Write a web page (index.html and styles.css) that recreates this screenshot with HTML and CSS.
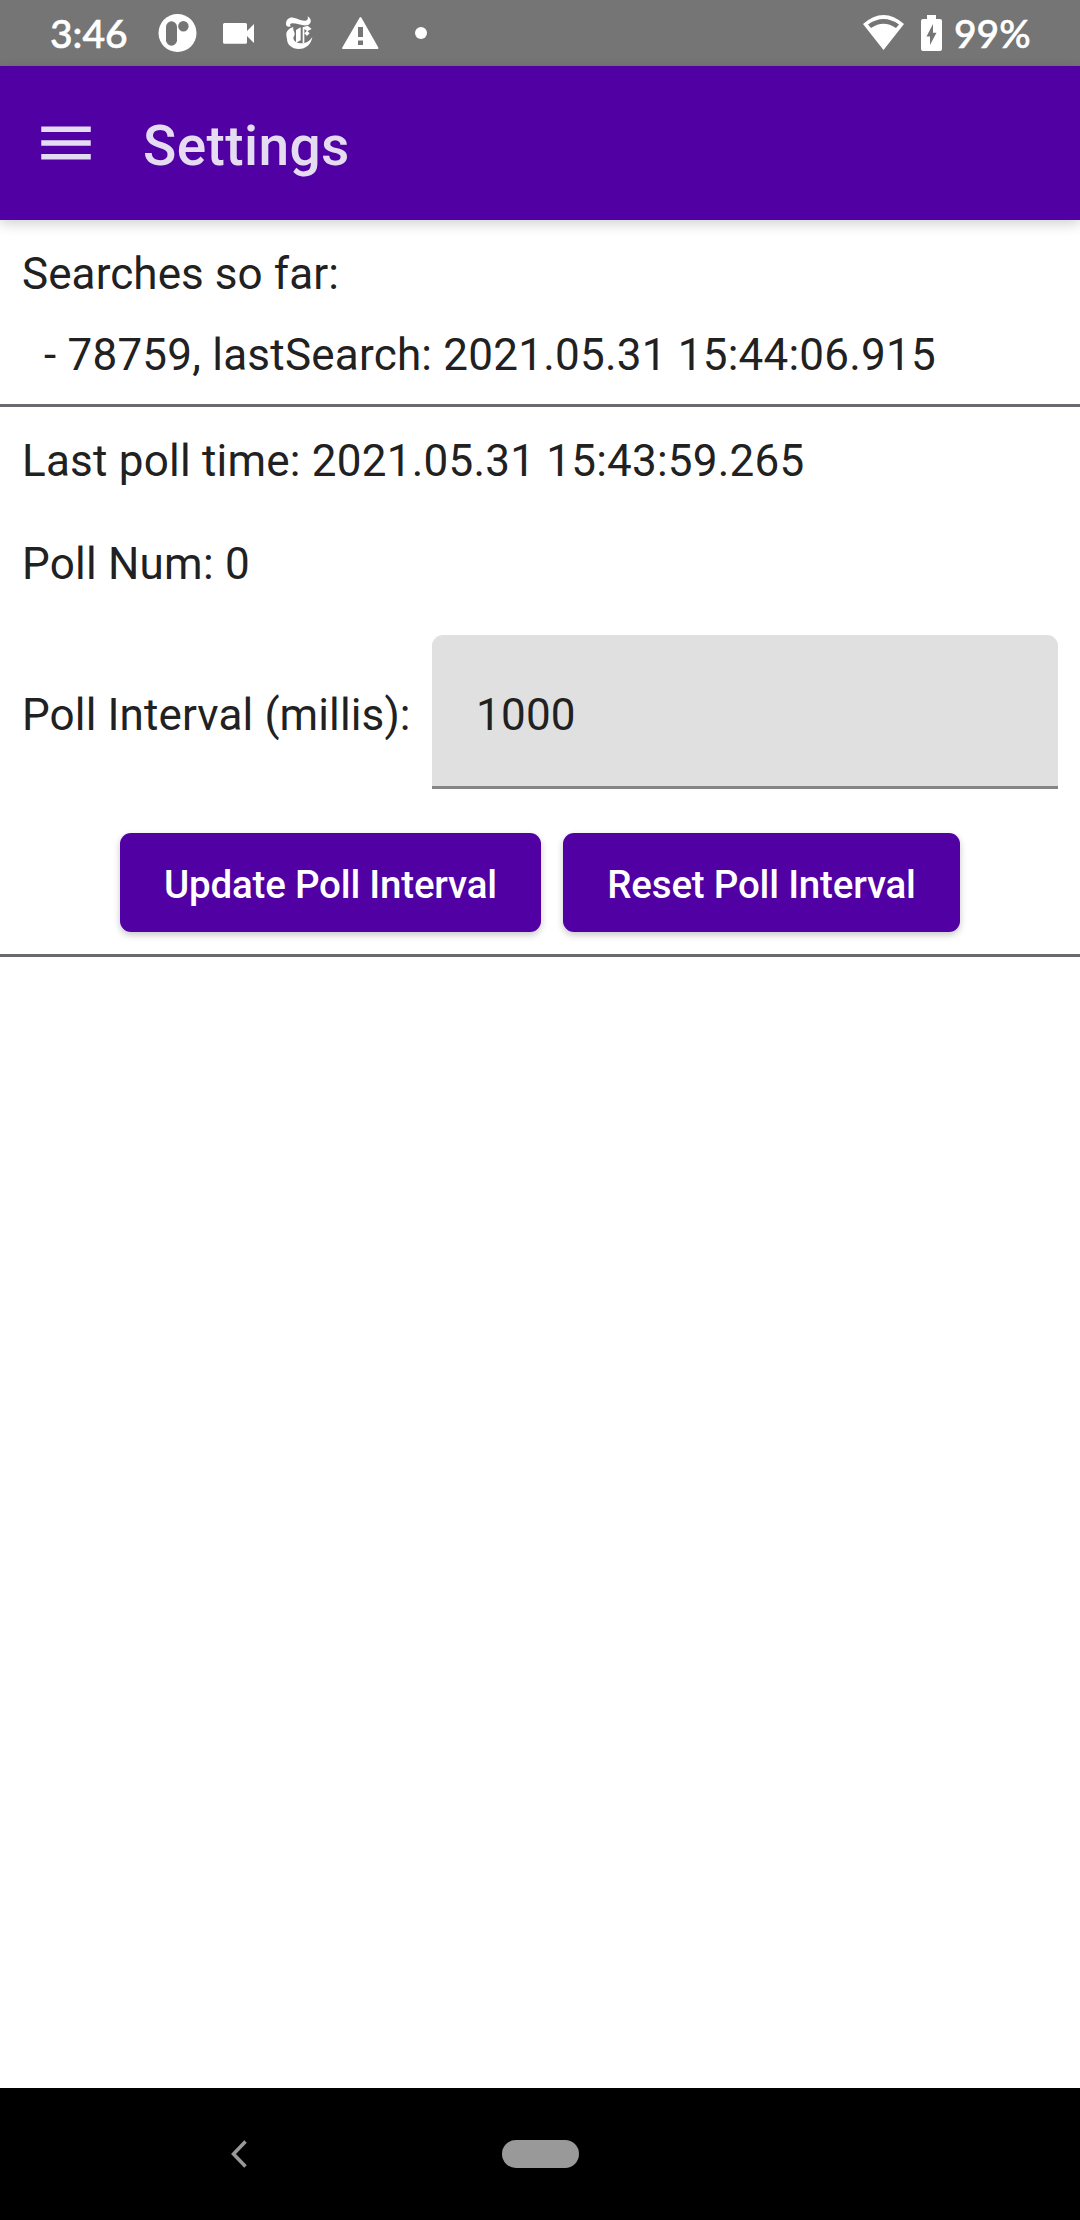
FILE: index.html
```html
<!DOCTYPE html>
<html lang="en">
<head>
<meta charset="utf-8">
<title>Settings</title>
<link rel="stylesheet" href="styles.css">
</head>
<body>
<div class="screen">
  <header class="status">
    <span class="status-text clock">3:46</span>
    <svg class="status-icons" width="280" height="66" viewBox="150 0 280 66" fill="#fff">
      <circle cx="177.5" cy="33" r="19"/>
      <rect x="166" y="21.3" width="11" height="24.4" rx="5.5" fill="#757575"/>
      <circle cx="183.4" cy="26.3" r="5.2" fill="#757575"/>
      <path d="M224.500 23H245.500Q247 23 247 24.500V31L254 24V43L247 36V42.300Q247 43.800 245.500 43.800H224.500Q223 43.800 223 42.300V24.500Q223 23 224.500 23Z"/>
      <g transform="translate(278 8) scale(.3333)">
        <path d="M24 48C24 34 34 27 46 29C60 32 75 40 84 38C90 36 92 30 88 25C100 30 103 46 90 51C76 56 56 45 42 46C36 47 34 50 39 55C30 58 24 55 24 48Z"/>
        <path d="M46 57C36 60 24 68 25 80C25 86 27 89 27 93C27 110 42 123 62 123C84 123 100 108 103 86C95 100 83 106 72 106C58 106 47 100 46 91C46 86 50 84 50 77C50 70 44 68 46 57Z"/>
        <path d="M54 66L68 58V97L54 104Z"/>
        <path d="M74 58L89 53L101 63L88 70L79 63V106H74ZM87 68L95 76L87 84L79 76Z"/>
      </g>
      <path fill-rule="evenodd" d="M359.700 17.500Q360.500 16.300 361.300 17.500L378.300 47.500Q378.800 49 377.500 49H343Q341.500 49 342.300 47.500ZM358 27V37H363V27ZM358 40.500V45H363V40.500Z"/>
      <circle cx="421" cy="33" r="6"/>
    </svg>
    <span class="spacer"></span>
    <svg class="status-system" width="82" height="66" viewBox="861 0 82 66" fill="#fff">
      <path fill-rule="evenodd" d="M863 24Q883.500 6 904 24L883.500 50ZM868 24.500L871 28Q883.500 19.500 896 28L899 24.500Q883.500 13.500 868 24.500Z"/>
      <path fill-rule="evenodd" d="M927 15H936V19H940Q942 19 942 21V49Q942 51 940 51H923Q921 51 921 49V21Q921 19 923 19H927ZM933 24L926.500 36.500H930V45L936.500 32.800H933Z"/>
    </svg>
    <span class="status-text battery">99%</span>
  </header>
  <nav class="appbar">
    <svg width="66" height="66" viewBox="0 0 24 24" fill="#e6dcf2"><path d="M3 18h18v-2H3v2zm0-5h18v-2H3v2zm0-7v2h18V6H3z"/></svg>
    <h1 class="title">Settings</h1>
  </nav>
  <main class="content">
    <section class="searches">
      <p class="heading">Searches so far:</p>
      <p class="entry">- 78759, lastSearch: 2021.05.31 15:44:06.915</p>
    </section>
    <section class="poll">
      <p>Last poll time: 2021.05.31 15:43:59.265</p>
      <p>Poll Num: 0</p>
      <div class="interval">
        <label for="interval">Poll Interval (millis):</label>
        <input id="interval" class="field" type="text" value="1000">
      </div>
      <div class="actions">
        <button class="btn update">Update Poll Interval</button>
        <button class="btn reset">Reset Poll Interval</button>
      </div>
    </section>
  </main>
  <footer class="navbar">
    <svg class="back" width="18" height="30" viewBox="0 0 18 30"><path d="M15.500 2.500L3.500 15L15.500 27.500" fill="none" stroke="#999" stroke-width="3.500"/></svg>
    <span class="home"></span>
  </footer>
</div>
</body>
</html>
```
FILE: styles.css
```css
* { box-sizing: border-box; }
body { margin: 0; background: #fff; font-family: Roboto, sans-serif; }
.screen { display: flex; flex-direction: column; width: 1080px; height: 2220px; }

.status { display: flex; height: 66px; padding: 0 50px; background: #757575; color: #fff; }
.status-text { font-family: Lato, sans-serif; font-weight: 500; font-size: 39px; line-height: 67px; white-space: nowrap; -webkit-text-stroke: .6px #fff; }
.clock { width: 100px; }
.battery { width: 76px; margin-left: 11px; }
.spacer { flex: 1; }

.appbar { display: flex; align-items: center; gap: 44px; height: 154px; padding-left: 33px; background: #5000a3; box-shadow: 0 4px 12px rgba(0, 0, 0, .18); }
.title { margin: 5px 0 0; color: #e6dcf2; font-size: 55px; line-height: 64px; font-weight: 500; letter-spacing: .41px; }

.content { flex: 1; color: #212121; font-size: 44px; line-height: 52px; letter-spacing: .22px; }
.content p { margin: 0; white-space: nowrap; }
.searches { height: 187px; padding: 28px 22px 0; border-bottom: 3px solid #696a6f; }
.searches .heading { letter-spacing: .08px; }
.searches .entry { margin: 29px 0 0 22px; }
.poll { height: 550px; padding: 28px 22px 0; border-bottom: 3px solid #696a6f; }
.poll p { margin-bottom: 51px; }
.interval { display: flex; align-items: center; justify-content: space-between; height: 154px; margin-top: -6px; }
.interval label { padding-top: 6px; letter-spacing: .12px; white-space: nowrap; }
.field { width: 626px; height: 154px; padding: 8px 44px 0; border: 0; border-bottom: 3px solid #858585; border-radius: 11px 11px 0 0; background: #e0e0e0; color: inherit; font: inherit; letter-spacing: inherit; outline: 0; }
.actions { display: flex; justify-content: center; gap: 22px; margin-top: 44px; }
.btn { height: 99px; padding: 4px 0 0; border: 0; border-radius: 11px; background: #5000a3; box-shadow: 0 3px 7px rgba(0, 0, 0, .22); color: #fff; font: 500 38.5px/46px Roboto, sans-serif; letter-spacing: -.2px; white-space: nowrap; }
.update { width: 421px; }
.reset { width: 397px; }

.navbar { display: flex; align-items: center; height: 132px; padding: 0 0 0 230px; background: #000; }
.home { width: 77px; height: 28px; margin-left: 254px; border-radius: 14px; background: #999; }
```
